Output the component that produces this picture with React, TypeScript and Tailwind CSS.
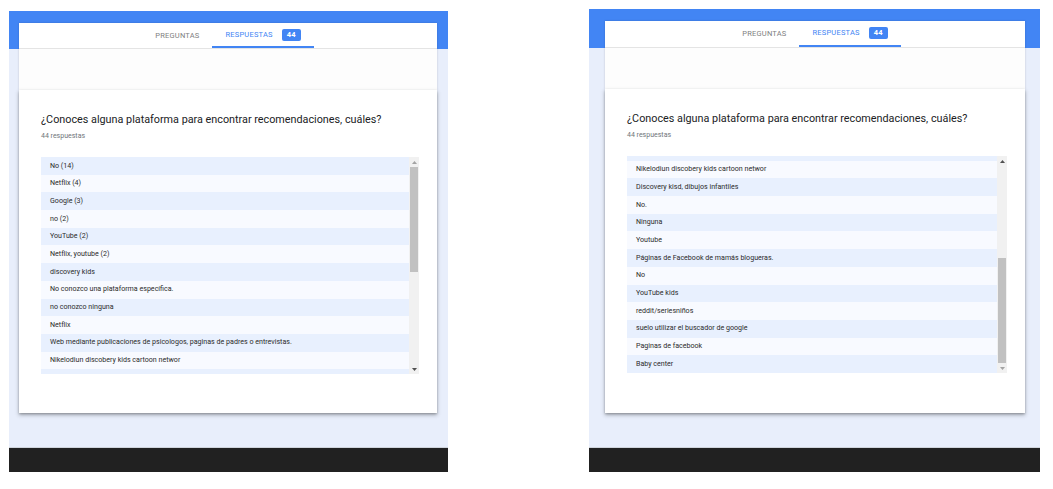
import React from 'react';
import clsx from 'clsx';

const answers = [
  'No (14)',
  'Netflix (4)',
  'Google (3)',
  'no (2)',
  'YouTube (2)',
  'Netflix, youtube (2)',
  'discovery kids',
  'No conozco una plataforma específica.',
  'no conozco ninguna',
  'Netflix',
  'Web mediante publicaciones de psicologos, paginas de padres o entrevistas.',
  'Nikelodiun discobery kids cartoon networ',
  'Discovery kisd, dibujos infantiles',
  'No.',
  'Ninguna',
  'Youtube',
  'Páginas de Facebook de mamás blogueras.',
  'No',
  'YouTube kids',
  'reddit/seriesniños',
  'suelo utilizar el buscador de google',
  'Paginas de facebook',
  'Baby center',
];

const Arrow: React.FC<{ up?: boolean; dim?: boolean }> = ({ up, dim }) => (
  <div className="h-[10px] flex items-center justify-center">
    <svg width="5" height="3" viewBox="0 0 5 3">
      <path d={up ? 'M0 3 L2.5 0 L5 3 Z' : 'M0 0 L2.5 3 L5 0 Z'} fill={dim ? '#a3a3a3' : '#505050'} />
    </svg>
  </div>
);

const TabCard: React.FC<{ tall?: boolean }> = ({ tall }) => (
  <div className="bg-white shadow-[0_0_2px_rgba(0,0,0,0.18)]">
    <div
      className={clsx(
        'flex justify-center border-b border-[#e4e4e4] text-[7.5px] tracking-[0.2px]',
        tall ? 'h-[27px]' : 'h-[26px]'
      )}
    >
      <div className="px-[13px] flex items-center text-[#808080]">PREGUNTAS</div>
      <div className="px-[13px] flex items-center gap-[9px] text-[#4285f4] border-b-2 border-[#4285f4]">
        <span>RESPUESTAS</span>
        <span className="h-[12px] w-[19px] flex items-center justify-center rounded-[2px] bg-[#4285f4] text-white font-bold">
          44
        </span>
      </div>
    </div>
    <div className="h-[41px] bg-[#fdfdfd]" />
  </div>
);

const QuestionCard: React.FC<{ scrolled?: boolean }> = ({ scrolled }) => {
  // only the rows that show in the scrolled window
  const first = scrolled ? 10 : 0;
  const rows = scrolled ? answers.slice(10) : answers.slice(0, 13);

  return (
    <div
      className={clsx(
        'bg-white pt-[22px] pl-[22px] pr-[18px] shadow-[0_1px_2px_rgba(0,0,0,0.2),0_2px_4px_rgba(60,64,67,0.4)]',
        scrolled ? 'h-[324px]' : 'h-[323px]'
      )}
    >
      <h2 className="text-[10.8px] leading-[16px] text-[#202124] whitespace-nowrap">
        ¿Conoces alguna plataforma para encontrar recomendaciones, cuáles?
      </h2>
      <p className="mt-[3px] text-[7px] leading-[10px] text-[#70757a]">44 respuestas</p>
      <div className="mt-[16px] h-[217px] flex">
        <div className="flex-1 overflow-hidden">
          <div className={clsx(scrolled && '-mt-[13px]')}>
            {rows.map((a, i) => (
              <div
                key={first + i}
                className={clsx(
                  'h-[17.7px] flex items-center pl-[9px] text-[7.1px] text-[#2b2b2b] whitespace-nowrap',
                  (first + i) % 2 === 0 ? 'bg-[#e8f0fe]' : 'bg-[#f8faff]'
                )}
              >
                {a}
              </div>
            ))}
          </div>
        </div>
        <div className="w-[10px] bg-[#f1f1f1] flex flex-col">
          <Arrow up dim={!scrolled} />
          <div className={clsx('flex-1 flex flex-col px-[1px]', scrolled ? 'justify-end' : 'justify-start')}>
            <div className="h-[105px] bg-[#c1c1c1]" />
          </div>
          <Arrow dim={scrolled} />
        </div>
      </div>
    </div>
  );
};

const Panel: React.FC<{ className: string; bodyClass: string; scrolled?: boolean }> = ({
  className,
  bodyClass,
  scrolled,
}) => (
  <div className={clsx('flex flex-col', className)}>
    <div className={bodyClass}>
      <TabCard tall={scrolled} />
      <QuestionCard scrolled={scrolled} />
    </div>
    <div className="h-[25px] bg-[#212121] border-t border-[#cfd4dc]" />
  </div>
);

export default function App() {
  return (
    <div className="w-[1053px] h-[489px] bg-white flex items-start pl-[9px] gap-[141px] font-['Roboto',sans-serif]">
      <Panel
        className="mt-[11px] w-[439px]"
        bodyClass="h-[436px] pt-[12px] pl-[10px] pr-[11px] bg-[linear-gradient(#4285f4_0_38px,#e8eefb_38px)]"
      />
      <Panel
        className="mt-[9px] w-[451px]"
        bodyClass="h-[438px] pt-[12px] pl-[16px] pr-[15px] bg-[linear-gradient(#4285f4_0_39px,#e8eefb_39px)]"
        scrolled
      />
    </div>
  );
}
